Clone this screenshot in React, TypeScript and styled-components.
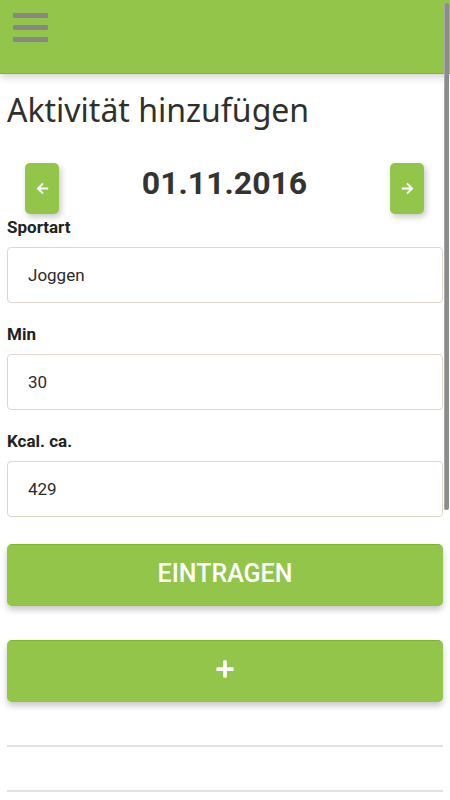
import styled, { createGlobalStyle } from 'styled-components';
import { FaArrowLeft, FaArrowRight, FaPlus } from 'react-icons/fa';

const GlobalStyle = createGlobalStyle`
  html, body {
    margin: 0;
    padding: 0;
    overflow: hidden;
    background: #ffffff;
  }
  body {
    font-family: Roboto, "Liberation Sans", sans-serif;
    color: #3e3f3a;
  }
  * {
    box-sizing: border-box;
  }
`;

const green = '#93c54b';
const greenEdge = '#7fb52f';

const Header = styled.header`
  height: 74px;
  background: ${green};
  border-bottom: 1px solid #7dba16;
  box-shadow: 0 3px 8px rgba(0, 0, 0, 0.18);
  padding: 13px 0 0 13px;
`;

const Burger = styled.button`
  display: flex;
  flex-direction: column;
  gap: 7px;
  width: 35px;
  padding: 0;
  border: none;
  background: none;
`;

const BurgerBar = styled.span`
  display: block;
  height: 5px;
  border-radius: 1px;
  background: #878787;
`;

const Main = styled.main`
  padding: 0 7px;
`;

const Title = styled.h1`
  margin: 16px 0 0;
  font-family: "Noto Sans", sans-serif;
  font-weight: 400;
  font-size: 32px;
  line-height: 40px;
  color: #2f302c;
`;

const DateRow = styled.div`
  display: flex;
  justify-content: space-between;
  align-items: flex-start;
  margin-top: 33px;
  padding: 0 19px 0 18px;
`;

const DateText = styled.div`
  margin-top: 1px;
  font-size: 32px;
  font-weight: 700;
  line-height: 38px;
  color: #333330;
`;

const ArrowButton = styled.button`
  width: 34px;
  height: 51px;
  display: flex;
  align-items: center;
  justify-content: center;
  border: none;
  border-radius: 5px;
  background: ${green};
  color: #ffffff;
  box-shadow: 2px 3px 6px rgba(0, 0, 0, 0.22);
  padding: 0;
`;

const Field = styled.div<{ $first?: boolean }>`
  margin-top: ${(p) => (p.$first ? 3 : 21)}px;
`;

const Label = styled.label`
  display: block;
  font-size: 17px;
  font-weight: 700;
  line-height: 20px;
  color: #222222;
`;

const Input = styled.input`
  display: block;
  width: 100%;
  height: 56px;
  margin-top: 10px;
  padding: 0 20px;
  border: 1px solid #dfd7ca;
  border-radius: 4px;
  font-family: Roboto, sans-serif;
  font-size: 17px;
  color: #2b2b2b;
  background: #ffffff;
  outline: none;
`;

const GreenButton = styled.button<{ $gap: number }>`
  display: flex;
  align-items: center;
  justify-content: center;
  width: 100%;
  height: 62px;
  margin-top: ${(p) => p.$gap}px;
  padding: 0 0 4px;
  border: 1px solid ${green};
  border-top-color: ${greenEdge};
  border-radius: 5px;
  background: ${green};
  color: #ffffff;
  font-family: Roboto, sans-serif;
  font-size: 25px;
  font-weight: 500;
  text-transform: uppercase;
  box-shadow: 0 4px 6px rgba(0, 0, 0, 0.22);
`;

const List = styled.ul`
  list-style: none;
  margin: 0;
  padding: 0;
`;

const ListItem = styled.li`
  height: 45px;
  border-bottom: 2px solid #e2e2e2;
`;

const ScrollThumb = styled.div`
  position: fixed;
  top: 3px;
  right: 1px;
  width: 5px;
  height: 507px;
  border-radius: 3px;
  background: #8c8c8c;
  box-shadow: inset 1px 0 0 #a8a8a8;
`;

export default function App() {
  return (
    <>
      <GlobalStyle />
      <Header>
        <Burger aria-label="Menü">
          <BurgerBar />
          <BurgerBar />
          <BurgerBar />
        </Burger>
      </Header>
      <Main>
        <Title>Aktivität hinzufügen</Title>
        <DateRow>
          <ArrowButton aria-label="Vorheriger Tag">
            <FaArrowLeft size={13} />
          </ArrowButton>
          <DateText>01.11.2016</DateText>
          <ArrowButton aria-label="Nächster Tag">
            <FaArrowRight size={13} />
          </ArrowButton>
        </DateRow>
        <Field $first>
          <Label>Sportart</Label>
          <Input defaultValue="Joggen" />
        </Field>
        <Field>
          <Label>Min</Label>
          <Input defaultValue="30" />
        </Field>
        <Field>
          <Label>Kcal. ca.</Label>
          <Input defaultValue="429" />
        </Field>
        <GreenButton $gap={27}>Eintragen</GreenButton>
        <GreenButton $gap={34}>
          <FaPlus size={20} />
        </GreenButton>
        <List>
          <ListItem />
          <ListItem />
          <ListItem />
        </List>
      </Main>
      <ScrollThumb />
    </>
  );
}
